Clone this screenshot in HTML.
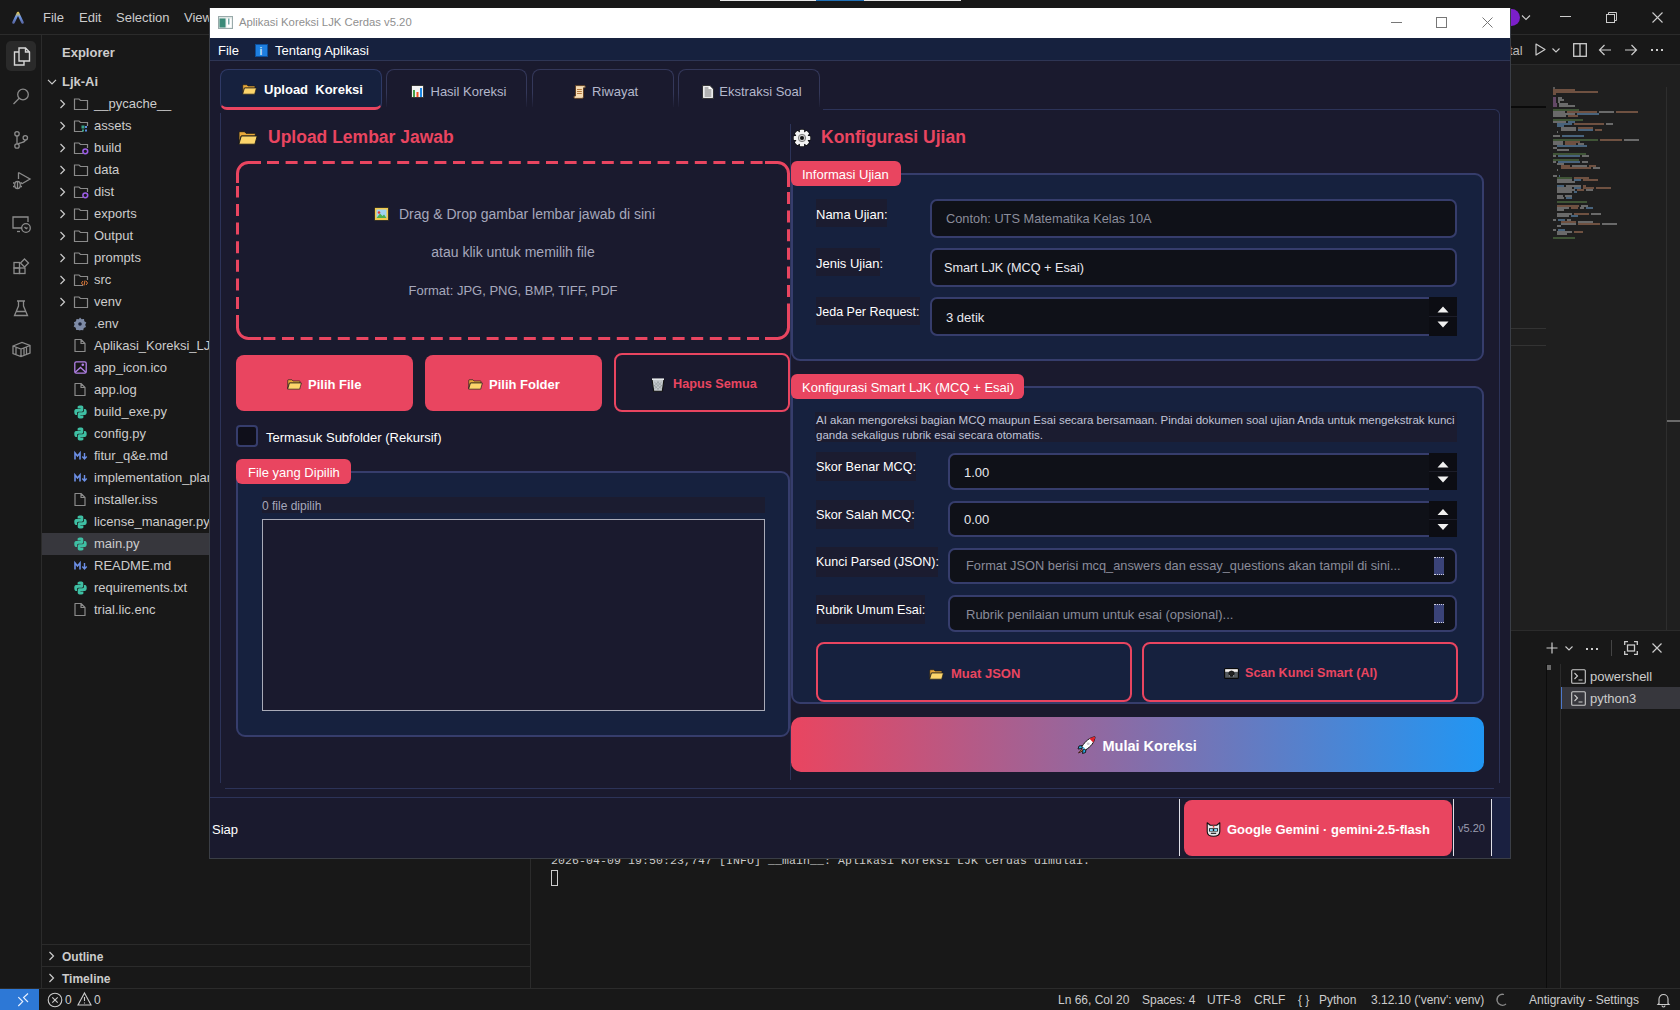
<!DOCTYPE html>
<html><head><meta charset="utf-8">
<style>
*{margin:0;padding:0;box-sizing:border-box}
html,body{width:1680px;height:1010px;overflow:hidden;background:#181818;font-family:"Liberation Sans",sans-serif;color:#ccc}
.a{position:absolute}
.t{position:absolute;white-space:nowrap;line-height:1}
svg{position:absolute;overflow:visible}
#vtitle{left:0;top:0;width:1680px;height:35px;background:#181818;border-bottom:1px solid #2b2b2b}
.menu{position:absolute;top:11px;font-size:13px;color:#cccccc;line-height:13px}
#act{left:0;top:35px;width:42px;height:953px;background:#181818;border-right:1px solid #2b2b2b}
#side{left:42px;top:35px;width:489px;height:953px;background:#181818;border-right:1px solid #2b2b2b}
#status{left:0;top:988px;width:1680px;height:22px;background:#181818;border-top:1px solid #2b2b2b}
.st{position:absolute;top:5px;font-size:12px;color:#cccccc;white-space:nowrap;line-height:12px}
.row{position:absolute;left:0;width:488px;height:22px}
.row .tx{position:absolute;left:52px;top:4px;font-size:13px;color:#cccccc;white-space:nowrap;line-height:14px}
.ai path,.ai rect,.ai circle,.ai ellipse{stroke:#8b8b8b;fill:none;stroke-width:1.3}
/* app */
#win{left:209px;top:8px;width:1302px;height:851px;background:#1a1a2e;overflow:hidden;border:1px solid #3a3e46;border-top:none}
.lbl{position:absolute;font-size:13px;color:#ffffff;white-space:nowrap;line-height:14px}
.inp{position:absolute;background:#0f0f1a;border:2px solid #2a3a6e;border-radius:7px}
.inp .v{position:absolute;left:12px;top:10px;font-size:13px;color:#e8e8e8;white-space:nowrap;line-height:14px}
.inp .ph{color:#8a8a98}
.grp{position:absolute;background:#16213e;border:2px solid #283868;border-radius:9px}
.pill{position:absolute;background:#e94560;border-radius:6px;color:#fff;font-size:13px;line-height:14px;white-space:nowrap}
.btn{position:absolute;border-radius:8px;font-weight:bold;font-size:13px;white-space:nowrap;line-height:14px}
.lb{position:absolute;background:#1a2036;height:29px}

</style></head><body>
<div class="a" id="vtitle">
  <svg style="left:11px;top:10px" width="14" height="14" viewBox="0 0 14 14"><defs><linearGradient id="lg" x1="0" y1="0" x2="0" y2="1"><stop offset="0" stop-color="#d9c25a"/><stop offset=".4" stop-color="#6f98e6"/><stop offset="1" stop-color="#5a6aa8"/></linearGradient></defs><path d="M2.5 12.5 L7 3 L11.5 12.5" stroke="url(#lg)" stroke-width="2.6" fill="none" stroke-linecap="round" stroke-linejoin="round"/></svg>
  <div class="menu" style="left:43px">File</div>
  <div class="menu" style="left:79px">Edit</div>
  <div class="menu" style="left:116px">Selection</div>
  <div class="menu" style="left:184px">View</div>
  <div class="a" style="left:720px;top:0;width:241px;height:1px;background:#e8e8e8"></div>
  <div class="a" style="left:816px;top:0;width:48px;height:1px;background:#1f6fb5"></div>
  <div class="a" style="left:1503px;top:9px;width:17px;height:17px;border-radius:9px;background:#7b1fc9"></div>
  <svg style="left:1521px;top:15px" width="10" height="6" viewBox="0 0 10 6"><path d="M1 0.5 L5 4.5 L9 0.5" stroke="#cccccc" fill="none" stroke-width="1.1"/></svg>
  <div class="a" style="left:1560px;top:16px;width:11px;height:1px;background:#cccccc"></div>
  <svg style="left:1606px;top:12px" width="11" height="11" viewBox="0 0 11 11"><rect x="0.5" y="2.5" width="8" height="8" stroke="#cccccc" fill="none"/><path d="M2.5 2.5 V0.5 H10.5 V8.5 H8.5" stroke="#cccccc" fill="none"/></svg>
  <svg style="left:1652px;top:12px" width="11" height="11" viewBox="0 0 11 11"><path d="M0.5 0.5 L10.5 10.5 M10.5 0.5 L0.5 10.5" stroke="#cccccc" stroke-width="1.1"/></svg>
</div>
<div class="a" id="act">
  <div class="a" style="left:6px;top:6px;width:30px;height:30px;border-radius:5px;background:#2a2a2a"></div>
  <svg style="left:13px;top:12px" width="18" height="19" viewBox="0 0 18 19"><path d="M6 1 H12.5 L16.5 5 V14 H6 Z M12.5 1 V5 H16.5" stroke="#d6d6d6" fill="none" stroke-width="1.4"/><path d="M6 5 H1.5 V18 H11 V14" stroke="#d6d6d6" fill="none" stroke-width="1.4"/></svg>
  <svg class="ai" style="left:12px;top:53px" width="18" height="18" viewBox="0 0 18 18"><circle cx="11" cy="6.5" r="5.3"/><path d="M7.2 10.3 L1.5 16"/></svg>
  <svg class="ai" style="left:12px;top:96px" width="18" height="18" viewBox="0 0 18 18"><circle cx="5" cy="2.8" r="2.2"/><circle cx="5" cy="15" r="2.2"/><circle cx="13.3" cy="6.8" r="2.2"/><path d="M5 5 V12.8 M13.3 9 C13.3 12 8 11 5.8 13.2"/></svg>
  <svg class="ai" style="left:12px;top:136px" width="19" height="19" viewBox="0 0 19 19"><path d="M6.5 1.5 L18 8 L9.5 13"/><path d="M6.5 1.5 V8"/><ellipse cx="5.5" cy="14" rx="2.8" ry="3.6"/><path d="M1 12 H2.7 M1 15.5 H2.7 M8.3 12 H10 M8.3 15.5 H10 M5.5 10.4 V17.6"/></svg>
  <svg class="ai" style="left:12px;top:181px" width="19" height="17" viewBox="0 0 19 17"><path d="M10 12 H1 V1 H16 V6"/><path d="M5 15.5 H8"/><circle cx="14" cy="12" r="4.3"/><path d="M12.5 11 L14 12.5 M15.5 11.5 L14 13"/></svg>
  <svg class="ai" style="left:13px;top:223px" width="17" height="16" viewBox="0 0 17 16"><rect x="1" y="4.5" width="5.5" height="5.5"/><rect x="1" y="10" width="5.5" height="5.5"/><rect x="6.5" y="10" width="5.5" height="5.5"/><path d="M11.5 1 L15.5 5 L11.5 9 L7.5 5 Z"/></svg>
  <svg class="ai" style="left:13px;top:265px" width="16" height="17" viewBox="0 0 16 17"><path d="M4 1 H12 M5.5 1 V6 L1.5 15.5 H14.5 L10.5 6 V1 M3.3 11.5 H12.7"/></svg>
  <svg class="ai" style="left:12px;top:306px" width="19" height="17" viewBox="0 0 19 17"><path d="M1 5 L10 1.5 L18 4.5 V12 L9 15.5 L1 12.5 Z M1 5 L9 8 L18 4.5 M9 8 V15.5 M4 6.3 V13.5 M12 7.3 V13.8 M14.5 6.5 V13"/></svg>
</div>
<div class="a" id="status">
  <div class="a" style="left:0;top:0;width:39px;height:22px;background:#2d78d6"></div>
  <svg style="left:17px;top:3px" width="12" height="14" viewBox="0 0 12 14"><path d="M11 1.5 L6.6 5.6 L11 10 M1.3 5.2 L5.7 9.6 L1.3 14" stroke="#e8f0ff" fill="none" stroke-width="1.2"/></svg>
  <svg style="left:47px;top:3px" width="16" height="16" viewBox="0 0 16 16"><circle cx="8" cy="8" r="6.8" stroke="#cccccc" fill="none" stroke-width="1.1"/><path d="M5.3 5.3 L10.7 10.7 M10.7 5.3 L5.3 10.7" stroke="#cccccc" stroke-width="1.1"/></svg>
  <div class="st" style="left:65px">0</div>
  <svg style="left:77px;top:3px" width="15" height="14" viewBox="0 0 15 14"><path d="M7.5 1 L14 13 H1 Z M7.5 5 V9 M7.5 10.5 V11.5" stroke="#cccccc" fill="none" stroke-width="1.1"/></svg>
  <div class="st" style="left:94px">0</div>
  <div class="st" style="left:1058px">Ln 66, Col 20</div>
  <div class="st" style="left:1142px">Spaces: 4</div>
  <div class="st" style="left:1207px">UTF-8</div>
  <div class="st" style="left:1254px">CRLF</div>
  <div class="st" style="left:1298px">{ }</div>
  <div class="st" style="left:1319px">Python</div>
  <div class="st" style="left:1371px">3.12.10 ('venv': venv)</div>
  <svg style="left:1495px;top:4px" width="12" height="13" viewBox="0 0 12 13"><path d="M9 1.5 A5.5 5.5 0 1 0 11 11" stroke="#8a8a8a" fill="none" stroke-width="1.3"/></svg>
  <div class="st" style="left:1529px">Antigravity - Settings</div>
  <svg style="left:1657px;top:4px" width="13" height="14" viewBox="0 0 13 14"><path d="M2 10.5 V6 A4.5 4.5 0 0 1 11 6 V10.5 L12 11.5 H1 Z M5 12.5 A1.5 1.5 0 0 0 8 12.5" stroke="#cccccc" fill="none" stroke-width="1.1"/></svg>
</div>
<div class="a" id="side">
<div class="t" style="left:20px;top:11px;font-size:13px;font-weight:bold;color:#cccccc">Explorer</div>
<div class="row" style="top:36px;"><svg style="left:5px;top:8px" width="10" height="6" viewBox="0 0 10 6"><path d="M1 0.8 L5 4.8 L9 0.8" stroke="#cccccc" fill="none" stroke-width="1.2"/></svg><div class="tx" style="left:20px;font-weight:bold">Ljk-Ai</div></div>
<div class="row" style="top:58px;"><svg style="left:17px;top:6px" width="8" height="10" viewBox="0 0 8 10"><path d="M1.5 1 L5.5 5 L1.5 9" stroke="#cccccc" fill="none" stroke-width="1.2"/></svg><svg style="left:31px;top:4px" width="16" height="14" viewBox="0 0 16 14"><path d="M1.5 2 H6 L7.5 3.5 H14.5 V12.5 H1.5 Z" stroke="#8b8b8b" fill="none" stroke-width="1.2"/></svg><div class="tx">__pycache__</div></div>
<div class="row" style="top:80px;"><svg style="left:17px;top:6px" width="8" height="10" viewBox="0 0 8 10"><path d="M1.5 1 L5.5 5 L1.5 9" stroke="#cccccc" fill="none" stroke-width="1.2"/></svg><svg style="left:31px;top:4px" width="16" height="14" viewBox="0 0 16 14"><path d="M10 12.5 H1.5 V2 H6 L7.5 3.5 H14.5 V7" stroke="#8b8b8b" fill="none" stroke-width="1.2"/><rect x="8.5" y="6.5" width="3" height="3" fill="#3aa58a"/><rect x="12" y="7" width="2" height="2" fill="#5a8de0"/><rect x="12" y="10.5" width="2" height="2" fill="#5a8de0"/><rect x="9" y="10.5" width="2" height="2" fill="#3aa58a"/></svg><div class="tx">assets</div></div>
<div class="row" style="top:102px;"><svg style="left:17px;top:6px" width="8" height="10" viewBox="0 0 8 10"><path d="M1.5 1 L5.5 5 L1.5 9" stroke="#cccccc" fill="none" stroke-width="1.2"/></svg><svg style="left:31px;top:4px" width="16" height="14" viewBox="0 0 16 14"><path d="M10 12.5 H1.5 V2 H6 L7.5 3.5 H14.5 V7" stroke="#8b8b8b" fill="none" stroke-width="1.2"/><circle cx="12.3" cy="10.3" r="2.4" stroke="#9d5ee8" fill="none" stroke-width="1.5"/></svg><div class="tx">build</div></div>
<div class="row" style="top:124px;"><svg style="left:17px;top:6px" width="8" height="10" viewBox="0 0 8 10"><path d="M1.5 1 L5.5 5 L1.5 9" stroke="#cccccc" fill="none" stroke-width="1.2"/></svg><svg style="left:31px;top:4px" width="16" height="14" viewBox="0 0 16 14"><path d="M1.5 2 H6 L7.5 3.5 H14.5 V12.5 H1.5 Z" stroke="#8b8b8b" fill="none" stroke-width="1.2"/></svg><div class="tx">data</div></div>
<div class="row" style="top:146px;"><svg style="left:17px;top:6px" width="8" height="10" viewBox="0 0 8 10"><path d="M1.5 1 L5.5 5 L1.5 9" stroke="#cccccc" fill="none" stroke-width="1.2"/></svg><svg style="left:31px;top:4px" width="16" height="14" viewBox="0 0 16 14"><path d="M10 12.5 H1.5 V2 H6 L7.5 3.5 H14.5 V7" stroke="#8b8b8b" fill="none" stroke-width="1.2"/><circle cx="12.3" cy="10.3" r="2.4" stroke="#9d5ee8" fill="none" stroke-width="1.5"/></svg><div class="tx">dist</div></div>
<div class="row" style="top:168px;"><svg style="left:17px;top:6px" width="8" height="10" viewBox="0 0 8 10"><path d="M1.5 1 L5.5 5 L1.5 9" stroke="#cccccc" fill="none" stroke-width="1.2"/></svg><svg style="left:31px;top:4px" width="16" height="14" viewBox="0 0 16 14"><path d="M1.5 2 H6 L7.5 3.5 H14.5 V12.5 H1.5 Z" stroke="#8b8b8b" fill="none" stroke-width="1.2"/></svg><div class="tx">exports</div></div>
<div class="row" style="top:190px;"><svg style="left:17px;top:6px" width="8" height="10" viewBox="0 0 8 10"><path d="M1.5 1 L5.5 5 L1.5 9" stroke="#cccccc" fill="none" stroke-width="1.2"/></svg><svg style="left:31px;top:4px" width="16" height="14" viewBox="0 0 16 14"><path d="M1.5 2 H6 L7.5 3.5 H14.5 V12.5 H1.5 Z" stroke="#8b8b8b" fill="none" stroke-width="1.2"/></svg><div class="tx">Output</div></div>
<div class="row" style="top:212px;"><svg style="left:17px;top:6px" width="8" height="10" viewBox="0 0 8 10"><path d="M1.5 1 L5.5 5 L1.5 9" stroke="#cccccc" fill="none" stroke-width="1.2"/></svg><svg style="left:31px;top:4px" width="16" height="14" viewBox="0 0 16 14"><path d="M1.5 2 H6 L7.5 3.5 H14.5 V12.5 H1.5 Z" stroke="#8b8b8b" fill="none" stroke-width="1.2"/></svg><div class="tx">prompts</div></div>
<div class="row" style="top:234px;"><svg style="left:17px;top:6px" width="8" height="10" viewBox="0 0 8 10"><path d="M1.5 1 L5.5 5 L1.5 9" stroke="#cccccc" fill="none" stroke-width="1.2"/></svg><svg style="left:31px;top:4px" width="16" height="14" viewBox="0 0 16 14"><path d="M10 12.5 H1.5 V2 H6 L7.5 3.5 H14.5 V7" stroke="#8b8b8b" fill="none" stroke-width="1.2"/><path d="M10 8 L8.5 10 L10 12 M13 8 L14.5 10 L13 12 M12 7.5 L11 12.5" stroke="#e07a3a" fill="none" stroke-width="1"/></svg><div class="tx">src</div></div>
<div class="row" style="top:256px;"><svg style="left:17px;top:6px" width="8" height="10" viewBox="0 0 8 10"><path d="M1.5 1 L5.5 5 L1.5 9" stroke="#cccccc" fill="none" stroke-width="1.2"/></svg><svg style="left:31px;top:4px" width="16" height="14" viewBox="0 0 16 14"><path d="M1.5 2 H6 L7.5 3.5 H14.5 V12.5 H1.5 Z" stroke="#8b8b8b" fill="none" stroke-width="1.2"/></svg><div class="tx">venv</div></div>
<div class="row" style="top:278px;"><svg style="left:31px;top:4px" width="14" height="14" viewBox="0 0 14 14"><path d="M7 0.5 L8.6 2.2 L11 1.9 L11.3 4.3 L13.3 5.6 L12.2 7.8 L13 10 L10.8 11 L10.2 13.3 L7.8 13 L7 13.5 L5.2 12.9 L3.2 13 L2.7 10.8 L0.7 9.6 L1.6 7.4 L0.9 5.2 L3 4.2 L3.5 1.9 L5.8 2.2 Z" fill="#7e8ba6"/><circle cx="7" cy="7" r="1.8" fill="#1a2238"/></svg><div class="tx">.env</div></div>
<div class="row" style="top:300px;"><svg style="left:32px;top:3px" width="12" height="15" viewBox="0 0 12 15"><path d="M1 1.5 H7 L11 5.5 V13.5 H1 Z M7 1.5 V5.5 H11" stroke="#8b8b8b" fill="none" stroke-width="1.2" stroke-linejoin="round"/></svg><div class="tx">Aplikasi_Koreksi_LJK_Cerdas.spec</div></div>
<div class="row" style="top:322px;"><svg style="left:32px;top:4px" width="13" height="13" viewBox="0 0 13 13"><rect x="0.8" y="0.8" width="11.4" height="11.4" rx="1.5" stroke="#b180e6" fill="none" stroke-width="1.3"/><path d="M1 11.5 L6.5 6.5 L12 11.5" stroke="#b180e6" fill="none" stroke-width="1.3"/><circle cx="8.8" cy="3.8" r="1.3" fill="#b180e6"/></svg><div class="tx">app_icon.ico</div></div>
<div class="row" style="top:344px;"><svg style="left:32px;top:3px" width="12" height="15" viewBox="0 0 12 15"><path d="M1 1.5 H7 L11 5.5 V13.5 H1 Z M7 1.5 V5.5 H11" stroke="#8b8b8b" fill="none" stroke-width="1.2" stroke-linejoin="round"/></svg><div class="tx">app.log</div></div>
<div class="row" style="top:366px;"><svg style="left:32px;top:4px" width="13" height="14" viewBox="0 0 13 14"><path d="M6.5 0.5 C3.5 0.5 3.6 1.8 3.6 1.8 V3.4 H6.6 V4 H2.2 C2.2 4 0.3 3.8 0.3 6.9 C0.3 10 2 9.9 2 9.9 H3 V8.4 C3 8.4 2.9 6.7 4.7 6.7 H7.6 C7.6 6.7 9.3 6.7 9.3 5 V2.2 C9.3 2.2 9.5 0.5 6.5 0.5 Z" fill="#3ebfa3"/><path d="M6.5 13.5 C9.5 13.5 9.4 12.2 9.4 12.2 V10.6 H6.4 V10 H10.8 C10.8 10 12.7 10.2 12.7 7.1 C12.7 4 11 4.1 11 4.1 H10 V5.6 C10 5.6 10.1 7.3 8.3 7.3 H5.4 C5.4 7.3 3.7 7.3 3.7 9 V11.8 C3.7 11.8 3.5 13.5 6.5 13.5 Z" fill="#3ebfa3"/></svg><div class="tx">build_exe.py</div></div>
<div class="row" style="top:388px;"><svg style="left:32px;top:4px" width="13" height="14" viewBox="0 0 13 14"><path d="M6.5 0.5 C3.5 0.5 3.6 1.8 3.6 1.8 V3.4 H6.6 V4 H2.2 C2.2 4 0.3 3.8 0.3 6.9 C0.3 10 2 9.9 2 9.9 H3 V8.4 C3 8.4 2.9 6.7 4.7 6.7 H7.6 C7.6 6.7 9.3 6.7 9.3 5 V2.2 C9.3 2.2 9.5 0.5 6.5 0.5 Z" fill="#3ebfa3"/><path d="M6.5 13.5 C9.5 13.5 9.4 12.2 9.4 12.2 V10.6 H6.4 V10 H10.8 C10.8 10 12.7 10.2 12.7 7.1 C12.7 4 11 4.1 11 4.1 H10 V5.6 C10 5.6 10.1 7.3 8.3 7.3 H5.4 C5.4 7.3 3.7 7.3 3.7 9 V11.8 C3.7 11.8 3.5 13.5 6.5 13.5 Z" fill="#3ebfa3"/></svg><div class="tx">config.py</div></div>
<div class="row" style="top:410px;"><svg style="left:32px;top:7px" width="14" height="8" viewBox="0 0 14 8"><path d="M1 7.5 V1 L3.5 4 L6 1 V7.5" stroke="#6c8fe6" fill="none" stroke-width="1.6"/><path d="M10.5 1 V7 M8.3 4.5 L10.5 7 L12.7 4.5" stroke="#6c8fe6" fill="none" stroke-width="1.4"/></svg><div class="tx">fitur_q&amp;e.md</div></div>
<div class="row" style="top:432px;"><svg style="left:32px;top:7px" width="14" height="8" viewBox="0 0 14 8"><path d="M1 7.5 V1 L3.5 4 L6 1 V7.5" stroke="#6c8fe6" fill="none" stroke-width="1.6"/><path d="M10.5 1 V7 M8.3 4.5 L10.5 7 L12.7 4.5" stroke="#6c8fe6" fill="none" stroke-width="1.4"/></svg><div class="tx">implementation_plan.md</div></div>
<div class="row" style="top:454px;"><svg style="left:32px;top:3px" width="12" height="15" viewBox="0 0 12 15"><path d="M1 1.5 H7 L11 5.5 V13.5 H1 Z M7 1.5 V5.5 H11" stroke="#8b8b8b" fill="none" stroke-width="1.2" stroke-linejoin="round"/></svg><div class="tx">installer.iss</div></div>
<div class="row" style="top:476px;"><svg style="left:32px;top:4px" width="13" height="14" viewBox="0 0 13 14"><path d="M6.5 0.5 C3.5 0.5 3.6 1.8 3.6 1.8 V3.4 H6.6 V4 H2.2 C2.2 4 0.3 3.8 0.3 6.9 C0.3 10 2 9.9 2 9.9 H3 V8.4 C3 8.4 2.9 6.7 4.7 6.7 H7.6 C7.6 6.7 9.3 6.7 9.3 5 V2.2 C9.3 2.2 9.5 0.5 6.5 0.5 Z" fill="#3ebfa3"/><path d="M6.5 13.5 C9.5 13.5 9.4 12.2 9.4 12.2 V10.6 H6.4 V10 H10.8 C10.8 10 12.7 10.2 12.7 7.1 C12.7 4 11 4.1 11 4.1 H10 V5.6 C10 5.6 10.1 7.3 8.3 7.3 H5.4 C5.4 7.3 3.7 7.3 3.7 9 V11.8 C3.7 11.8 3.5 13.5 6.5 13.5 Z" fill="#3ebfa3"/></svg><div class="tx">license_manager.py</div></div>
<div class="row" style="top:498px;background:#37373d;"><svg style="left:32px;top:4px" width="13" height="14" viewBox="0 0 13 14"><path d="M6.5 0.5 C3.5 0.5 3.6 1.8 3.6 1.8 V3.4 H6.6 V4 H2.2 C2.2 4 0.3 3.8 0.3 6.9 C0.3 10 2 9.9 2 9.9 H3 V8.4 C3 8.4 2.9 6.7 4.7 6.7 H7.6 C7.6 6.7 9.3 6.7 9.3 5 V2.2 C9.3 2.2 9.5 0.5 6.5 0.5 Z" fill="#3ebfa3"/><path d="M6.5 13.5 C9.5 13.5 9.4 12.2 9.4 12.2 V10.6 H6.4 V10 H10.8 C10.8 10 12.7 10.2 12.7 7.1 C12.7 4 11 4.1 11 4.1 H10 V5.6 C10 5.6 10.1 7.3 8.3 7.3 H5.4 C5.4 7.3 3.7 7.3 3.7 9 V11.8 C3.7 11.8 3.5 13.5 6.5 13.5 Z" fill="#3ebfa3"/></svg><div class="tx">main.py</div></div>
<div class="row" style="top:520px;"><svg style="left:32px;top:7px" width="14" height="8" viewBox="0 0 14 8"><path d="M1 7.5 V1 L3.5 4 L6 1 V7.5" stroke="#6c8fe6" fill="none" stroke-width="1.6"/><path d="M10.5 1 V7 M8.3 4.5 L10.5 7 L12.7 4.5" stroke="#6c8fe6" fill="none" stroke-width="1.4"/></svg><div class="tx">README.md</div></div>
<div class="row" style="top:542px;"><svg style="left:32px;top:4px" width="13" height="14" viewBox="0 0 13 14"><path d="M6.5 0.5 C3.5 0.5 3.6 1.8 3.6 1.8 V3.4 H6.6 V4 H2.2 C2.2 4 0.3 3.8 0.3 6.9 C0.3 10 2 9.9 2 9.9 H3 V8.4 C3 8.4 2.9 6.7 4.7 6.7 H7.6 C7.6 6.7 9.3 6.7 9.3 5 V2.2 C9.3 2.2 9.5 0.5 6.5 0.5 Z" fill="#3ebfa3"/><path d="M6.5 13.5 C9.5 13.5 9.4 12.2 9.4 12.2 V10.6 H6.4 V10 H10.8 C10.8 10 12.7 10.2 12.7 7.1 C12.7 4 11 4.1 11 4.1 H10 V5.6 C10 5.6 10.1 7.3 8.3 7.3 H5.4 C5.4 7.3 3.7 7.3 3.7 9 V11.8 C3.7 11.8 3.5 13.5 6.5 13.5 Z" fill="#3ebfa3"/></svg><div class="tx">requirements.txt</div></div>
<div class="row" style="top:564px;"><svg style="left:32px;top:3px" width="12" height="15" viewBox="0 0 12 15"><path d="M1 1.5 H7 L11 5.5 V13.5 H1 Z M7 1.5 V5.5 H11" stroke="#8b8b8b" fill="none" stroke-width="1.2" stroke-linejoin="round"/></svg><div class="tx">trial.lic.enc</div></div>
<div class="a" style="left:0;top:909px;width:488px;height:1px;background:#2b2b2b"></div>
<div class="row" style="top:910px"><svg style="left:6px;top:6px" width="8" height="10" viewBox="0 0 8 10"><path d="M1.5 1 L5.5 5 L1.5 9" stroke="#cccccc" fill="none" stroke-width="1.2"/></svg><div class="tx" style="left:20px;font-weight:bold;font-size:12px;top:5px">Outline</div></div>
<div class="a" style="left:0;top:931px;width:488px;height:1px;background:#2b2b2b"></div>
<div class="row" style="top:932px"><svg style="left:6px;top:6px" width="8" height="10" viewBox="0 0 8 10"><path d="M1.5 1 L5.5 5 L1.5 9" stroke="#cccccc" fill="none" stroke-width="1.2"/></svg><div class="tx" style="left:20px;font-weight:bold;font-size:12px;top:5px">Timeline</div></div>
</div><div class="a" style="left:531px;top:35px;width:1149px;height:30px;background:#181818;border-bottom:1px solid #2b2b2b"></div>
<div class="t" style="left:1509px;top:44px;font-size:13px;color:#b8b8b8">tal</div>
<svg style="left:1535px;top:43px" width="11" height="13" viewBox="0 0 11 13"><path d="M1 1 L10 6.5 L1 12 Z" stroke="#cccccc" fill="none" stroke-width="1.2" stroke-linejoin="round"/></svg>
<svg style="left:1552px;top:48px" width="8" height="5" viewBox="0 0 8 5"><path d="M0.5 0.5 L4 4 L7.5 0.5" stroke="#cccccc" fill="none" stroke-width="1.1"/></svg>
<svg style="left:1573px;top:43px" width="14" height="14" viewBox="0 0 14 14"><rect x="0.7" y="0.7" width="12.6" height="12.6" stroke="#cccccc" fill="none" stroke-width="1.3"/><path d="M7 0.7 V13.3" stroke="#cccccc" stroke-width="1.3"/></svg>
<svg style="left:1598px;top:44px" width="14" height="12" viewBox="0 0 14 12"><path d="M13 6 H1.5 M6.5 1 L1.5 6 L6.5 11" stroke="#cccccc" fill="none" stroke-width="1.2"/></svg>
<svg style="left:1624px;top:44px" width="14" height="12" viewBox="0 0 14 12"><path d="M1 6 H12.5 M7.5 1 L12.5 6 L7.5 11" stroke="#cccccc" fill="none" stroke-width="1.2"/></svg>
<div class="a" style="left:1651px;top:49px;width:2px;height:2px;background:#cccccc"></div>
<div class="a" style="left:1656px;top:49px;width:2px;height:2px;background:#cccccc"></div>
<div class="a" style="left:1661px;top:49px;width:2px;height:2px;background:#cccccc"></div>
<div class="a" style="left:531px;top:65px;width:1149px;height:565px;background:#1f1f1f"></div>
<div class="a" style="left:1510px;top:106px;width:36px;height:2px;background:#0a0a0a"></div>
<div class="a" style="left:1510px;top:328px;width:36px;height:1px;background:#333"></div>
<div class="a" style="left:1510px;top:345px;width:36px;height:1px;background:#333"></div>
<div class="a" style="left:1666px;top:87px;width:1px;height:544px;background:#2e2e2e"></div>
<div class="a" style="left:1667px;top:420px;width:13px;height:2px;background:#6a6a6a"></div>
<div class="a" style="left:1553px;top:87px;width:2px;height:1.5px;background:#888;opacity:.55"></div>
<div class="a" style="left:1553px;top:89px;width:22px;height:1.5px;background:#b07a5c;opacity:.55"></div>
<div class="a" style="left:1553px;top:91px;width:45px;height:1.5px;background:#b07a5c;opacity:.55"></div>
<div class="a" style="left:1553px;top:93px;width:3px;height:1.5px;background:#b07a5c;opacity:.55"></div>
<div class="a" style="left:1553px;top:97px;width:3px;height:1.5px;background:#9a6aa0;opacity:.55"></div>
<div class="a" style="left:1558px;top:97px;width:4px;height:1.5px;background:#a8a8a8;opacity:.55"></div>
<div class="a" style="left:1553px;top:99px;width:3px;height:1.5px;background:#9a6aa0;opacity:.55"></div>
<div class="a" style="left:1558px;top:99px;width:6px;height:1.5px;background:#a8a8a8;opacity:.55"></div>
<div class="a" style="left:1553px;top:101px;width:3px;height:1.5px;background:#9a6aa0;opacity:.55"></div>
<div class="a" style="left:1558px;top:101px;width:2px;height:1.5px;background:#a8a8a8;opacity:.55"></div>
<div class="a" style="left:1553px;top:103px;width:4px;height:1.5px;background:#9a6aa0;opacity:.55"></div>
<div class="a" style="left:1559px;top:103px;width:9px;height:1.5px;background:#a8a8a8;opacity:.55"></div>
<div class="a" style="left:1553px;top:105px;width:4px;height:1.5px;background:#9a6aa0;opacity:.55"></div>
<div class="a" style="left:1559px;top:105px;width:16px;height:1.5px;background:#a8a8a8;opacity:.55"></div>
<div class="a" style="left:1553px;top:109px;width:26px;height:1.5px;background:#5a8048;opacity:.55"></div>
<div class="a" style="left:1553px;top:111px;width:12px;height:1.5px;background:#a8a8a8;opacity:.55"></div>
<div class="a" style="left:1567px;top:111px;width:30px;height:1.5px;background:#b07a5c;opacity:.55"></div>
<div class="a" style="left:1599px;top:111px;width:15px;height:1.5px;background:#a8a8a8;opacity:.55"></div>
<div class="a" style="left:1616px;top:111px;width:22px;height:1.5px;background:#b07a5c;opacity:.55"></div>
<div class="a" style="left:1553px;top:113px;width:22px;height:1.5px;background:#a8a8a8;opacity:.55"></div>
<div class="a" style="left:1577px;top:113px;width:22px;height:1.5px;background:#6a9ac8;opacity:.55"></div>
<div class="a" style="left:1553px;top:115px;width:13px;height:1.5px;background:#a8a8a8;opacity:.55"></div>
<div class="a" style="left:1568px;top:115px;width:10px;height:1.5px;background:#b07a5c;opacity:.55"></div>
<div class="a" style="left:1553px;top:119px;width:30px;height:1.5px;background:#5a8048;opacity:.55"></div>
<div class="a" style="left:1553px;top:121px;width:13px;height:1.5px;background:#a8a8a8;opacity:.55"></div>
<div class="a" style="left:1568px;top:121px;width:7px;height:1.5px;background:#6a9ac8;opacity:.55"></div>
<div class="a" style="left:1557px;top:123px;width:15px;height:1.5px;background:#6a9ac8;opacity:.55"></div>
<div class="a" style="left:1574px;top:123px;width:30px;height:1.5px;background:#b07a5c;opacity:.55"></div>
<div class="a" style="left:1606px;top:123px;width:7px;height:1.5px;background:#a8a8a8;opacity:.55"></div>
<div class="a" style="left:1557px;top:125px;width:7px;height:1.5px;background:#6a9ac8;opacity:.55"></div>
<div class="a" style="left:1561px;top:127px;width:15px;height:1.5px;background:#a8a8a8;opacity:.55"></div>
<div class="a" style="left:1578px;top:127px;width:15px;height:1.5px;background:#b07a5c;opacity:.55"></div>
<div class="a" style="left:1561px;top:129px;width:15px;height:1.5px;background:#a8a8a8;opacity:.55"></div>
<div class="a" style="left:1578px;top:129px;width:15px;height:1.5px;background:#6a9ac8;opacity:.55"></div>
<div class="a" style="left:1595px;top:129px;width:7px;height:1.5px;background:#b07a5c;opacity:.55"></div>
<div class="a" style="left:1557px;top:131px;width:1px;height:1.5px;background:#a8a8a8;opacity:.55"></div>
<div class="a" style="left:1553px;top:135px;width:7px;height:1.5px;background:#a8a8a8;opacity:.55"></div>
<div class="a" style="left:1562px;top:135px;width:22px;height:1.5px;background:#6a9ac8;opacity:.55"></div>
<div class="a" style="left:1553px;top:139px;width:45px;height:1.5px;background:#5a8048;opacity:.55"></div>
<div class="a" style="left:1600px;top:139px;width:22px;height:1.5px;background:#b07a5c;opacity:.55"></div>
<div class="a" style="left:1624px;top:139px;width:15px;height:1.5px;background:#a8a8a8;opacity:.55"></div>
<div class="a" style="left:1553px;top:141px;width:10px;height:1.5px;background:#a8a8a8;opacity:.55"></div>
<div class="a" style="left:1565px;top:141px;width:15px;height:1.5px;background:#b07a5c;opacity:.55"></div>
<div class="a" style="left:1553px;top:143px;width:10px;height:1.5px;background:#a8a8a8;opacity:.55"></div>
<div class="a" style="left:1565px;top:143px;width:11px;height:1.5px;background:#b07a5c;opacity:.55"></div>
<div class="a" style="left:1578px;top:143px;width:6px;height:1.5px;background:#a8a8a8;opacity:.55"></div>
<div class="a" style="left:1557px;top:145px;width:30px;height:1.5px;background:#6a9ac8;opacity:.55"></div>
<div class="a" style="left:1553px;top:147px;width:4px;height:1.5px;background:#a8a8a8;opacity:.55"></div>
<div class="a" style="left:1557px;top:149px;width:12px;height:1.5px;background:#a8a8a8;opacity:.55"></div>
<div class="a" style="left:1553px;top:153px;width:33px;height:1.5px;background:#5a8048;opacity:.55"></div>
<div class="a" style="left:1553px;top:155px;width:3px;height:1.5px;background:#a8a8a8;opacity:.55"></div>
<div class="a" style="left:1558px;top:155px;width:22px;height:1.5px;background:#6a9ac8;opacity:.55"></div>
<div class="a" style="left:1582px;top:155px;width:7px;height:1.5px;background:#a8a8a8;opacity:.55"></div>
<div class="a" style="left:1553px;top:159px;width:26px;height:1.5px;background:#5a8048;opacity:.55"></div>
<div class="a" style="left:1553px;top:161px;width:3px;height:1.5px;background:#a8a8a8;opacity:.55"></div>
<div class="a" style="left:1558px;top:161px;width:22px;height:1.5px;background:#6a9ac8;opacity:.55"></div>
<div class="a" style="left:1582px;top:161px;width:6px;height:1.5px;background:#a8a8a8;opacity:.55"></div>
<div class="a" style="left:1557px;top:163px;width:7px;height:1.5px;background:#a8a8a8;opacity:.55"></div>
<div class="a" style="left:1561px;top:165px;width:9px;height:1.5px;background:#b07a5c;opacity:.55"></div>
<div class="a" style="left:1572px;top:165px;width:15px;height:1.5px;background:#a8a8a8;opacity:.55"></div>
<div class="a" style="left:1589px;top:165px;width:7px;height:1.5px;background:#b07a5c;opacity:.55"></div>
<div class="a" style="left:1561px;top:167px;width:30px;height:1.5px;background:#b07a5c;opacity:.55"></div>
<div class="a" style="left:1593px;top:167px;width:7px;height:1.5px;background:#a8a8a8;opacity:.55"></div>
<div class="a" style="left:1557px;top:169px;width:1px;height:1.5px;background:#a8a8a8;opacity:.55"></div>
<div class="a" style="left:1553px;top:175px;width:4px;height:1.5px;background:#a8a8a8;opacity:.55"></div>
<div class="a" style="left:1559px;top:175px;width:1px;height:1.5px;background:#6a9ac8;opacity:.55"></div>
<div class="a" style="left:1557px;top:177px;width:15px;height:1.5px;background:#5a8048;opacity:.55"></div>
<div class="a" style="left:1574px;top:177px;width:15px;height:1.5px;background:#b07a5c;opacity:.55"></div>
<div class="a" style="left:1557px;top:179px;width:15px;height:1.5px;background:#a8a8a8;opacity:.55"></div>
<div class="a" style="left:1574px;top:179px;width:7px;height:1.5px;background:#6a9ac8;opacity:.55"></div>
<div class="a" style="left:1583px;top:179px;width:15px;height:1.5px;background:#b07a5c;opacity:.55"></div>
<div class="a" style="left:1557px;top:181px;width:18px;height:1.5px;background:#a8a8a8;opacity:.55"></div>
<div class="a" style="left:1557px;top:185px;width:7px;height:1.5px;background:#6a9ac8;opacity:.55"></div>
<div class="a" style="left:1566px;top:185px;width:15px;height:1.5px;background:#a8a8a8;opacity:.55"></div>
<div class="a" style="left:1583px;top:185px;width:3px;height:1.5px;background:#b07a5c;opacity:.55"></div>
<div class="a" style="left:1557px;top:187px;width:15px;height:1.5px;background:#a8a8a8;opacity:.55"></div>
<div class="a" style="left:1574px;top:187px;width:7px;height:1.5px;background:#6a9ac8;opacity:.55"></div>
<div class="a" style="left:1583px;top:187px;width:11px;height:1.5px;background:#b07a5c;opacity:.55"></div>
<div class="a" style="left:1596px;top:187px;width:15px;height:1.5px;background:#b07a5c;opacity:.55"></div>
<div class="a" style="left:1557px;top:189px;width:18px;height:1.5px;background:#a8a8a8;opacity:.55"></div>
<div class="a" style="left:1577px;top:189px;width:7px;height:1.5px;background:#b07a5c;opacity:.55"></div>
<div class="a" style="left:1586px;top:189px;width:7px;height:1.5px;background:#a8a8a8;opacity:.55"></div>
<div class="a" style="left:1557px;top:191px;width:15px;height:1.5px;background:#a8a8a8;opacity:.55"></div>
<div class="a" style="left:1574px;top:191px;width:3px;height:1.5px;background:#6a9ac8;opacity:.55"></div>
<div class="a" style="left:1557px;top:195px;width:6px;height:1.5px;background:#a8a8a8;opacity:.55"></div>
<div class="a" style="left:1565px;top:195px;width:7px;height:1.5px;background:#a8a8a8;opacity:.55"></div>
<div class="a" style="left:1557px;top:197px;width:7px;height:1.5px;background:#a8a8a8;opacity:.55"></div>
<div class="a" style="left:1566px;top:197px;width:6px;height:1.5px;background:#6a9ac8;opacity:.55"></div>
<div class="a" style="left:1557px;top:201px;width:30px;height:1.5px;background:#5a8048;opacity:.55"></div>
<div class="a" style="left:1557px;top:205px;width:22px;height:1.5px;background:#b07a5c;opacity:.55"></div>
<div class="a" style="left:1581px;top:205px;width:7px;height:1.5px;background:#a8a8a8;opacity:.55"></div>
<div class="a" style="left:1557px;top:207px;width:12px;height:1.5px;background:#a8a8a8;opacity:.55"></div>
<div class="a" style="left:1571px;top:207px;width:7px;height:1.5px;background:#b07a5c;opacity:.55"></div>
<div class="a" style="left:1580px;top:207px;width:4px;height:1.5px;background:#a8a8a8;opacity:.55"></div>
<div class="a" style="left:1586px;top:207px;width:7px;height:1.5px;background:#6a9ac8;opacity:.55"></div>
<div class="a" style="left:1557px;top:209px;width:7px;height:1.5px;background:#a8a8a8;opacity:.55"></div>
<div class="a" style="left:1557px;top:213px;width:15px;height:1.5px;background:#a8a8a8;opacity:.55"></div>
<div class="a" style="left:1574px;top:213px;width:15px;height:1.5px;background:#b07a5c;opacity:.55"></div>
<div class="a" style="left:1591px;top:213px;width:10px;height:1.5px;background:#a8a8a8;opacity:.55"></div>
<div class="a" style="left:1557px;top:215px;width:12px;height:1.5px;background:#a8a8a8;opacity:.55"></div>
<div class="a" style="left:1571px;top:215px;width:7px;height:1.5px;background:#6a9ac8;opacity:.55"></div>
<div class="a" style="left:1553px;top:219px;width:3px;height:1.5px;background:#a8a8a8;opacity:.55"></div>
<div class="a" style="left:1558px;top:219px;width:7px;height:1.5px;background:#6a9ac8;opacity:.55"></div>
<div class="a" style="left:1567px;top:219px;width:4px;height:1.5px;background:#a8a8a8;opacity:.55"></div>
<div class="a" style="left:1561px;top:221px;width:15px;height:1.5px;background:#b07a5c;opacity:.55"></div>
<div class="a" style="left:1578px;top:221px;width:15px;height:1.5px;background:#a8a8a8;opacity:.55"></div>
<div class="a" style="left:1561px;top:223px;width:15px;height:1.5px;background:#a8a8a8;opacity:.55"></div>
<div class="a" style="left:1578px;top:223px;width:22px;height:1.5px;background:#b07a5c;opacity:.55"></div>
<div class="a" style="left:1602px;top:223px;width:15px;height:1.5px;background:#a8a8a8;opacity:.55"></div>
<div class="a" style="left:1557px;top:225px;width:4px;height:1.5px;background:#a8a8a8;opacity:.55"></div>
<div class="a" style="left:1553px;top:229px;width:3px;height:1.5px;background:#a8a8a8;opacity:.55"></div>
<div class="a" style="left:1558px;top:229px;width:7px;height:1.5px;background:#6a9ac8;opacity:.55"></div>
<div class="a" style="left:1557px;top:231px;width:15px;height:1.5px;background:#a8a8a8;opacity:.55"></div>
<div class="a" style="left:1574px;top:231px;width:9px;height:1.5px;background:#b07a5c;opacity:.55"></div>
<div class="a" style="left:1557px;top:233px;width:10px;height:1.5px;background:#a8a8a8;opacity:.55"></div>
<div class="a" style="left:1553px;top:237px;width:22px;height:1.5px;background:#5a8048;opacity:.55"></div>
<div class="a" style="left:531px;top:630px;width:1149px;height:358px;background:#181818;border-top:1px solid #2b2b2b"></div>
<svg style="left:1546px;top:642px" width="12" height="12" viewBox="0 0 12 12"><path d="M6 0.5 V11.5 M0.5 6 H11.5" stroke="#cccccc" stroke-width="1.2"/></svg>
<svg style="left:1565px;top:646px" width="8" height="5" viewBox="0 0 8 5"><path d="M0.5 0.5 L4 4 L7.5 0.5" stroke="#cccccc" fill="none" stroke-width="1.1"/></svg>
<div class="a" style="left:1586px;top:648px;width:2px;height:2px;background:#cccccc"></div>
<div class="a" style="left:1591px;top:648px;width:2px;height:2px;background:#cccccc"></div>
<div class="a" style="left:1596px;top:648px;width:2px;height:2px;background:#cccccc"></div>
<div class="a" style="left:1611px;top:640px;width:1px;height:16px;background:#444"></div>
<svg style="left:1624px;top:641px" width="14" height="14" viewBox="0 0 14 14"><path d="M0.7 4 V0.7 H4 M10 0.7 H13.3 V4 M13.3 10 V13.3 H10 M4 13.3 H0.7 V10" stroke="#cccccc" fill="none" stroke-width="1.3"/><rect x="3.5" y="4" width="7" height="6" stroke="#cccccc" fill="none" stroke-width="1.3"/></svg>
<svg style="left:1652px;top:643px" width="10" height="10" viewBox="0 0 10 10"><path d="M0.5 0.5 L9.5 9.5 M9.5 0.5 L0.5 9.5" stroke="#cccccc" stroke-width="1.2"/></svg>
<div class="a" style="left:1546px;top:664px;width:1px;height:324px;background:#0c0c0c"></div>
<div class="a" style="left:1560px;top:664px;width:1px;height:324px;background:#2b2b2b"></div>
<div class="a" style="left:1547px;top:665px;width:4px;height:5px;background:#6a6a6a"></div>
<div class="a" style="left:1561px;top:687px;width:119px;height:22px;background:#37373d"></div>
<div class="a" style="left:1561px;top:687px;width:1px;height:22px;background:#4d78cc"></div>
<svg style="left:1571px;top:669px" width="15" height="15" viewBox="0 0 15 15"><rect x="0.7" y="0.7" width="13.6" height="13.6" rx="1" stroke="#cccccc" fill="none" stroke-width="1.1"/><path d="M3.5 4 L6.5 7 L3.5 10 M7.5 11 H11.5" stroke="#cccccc" fill="none" stroke-width="1.1"/></svg>
<div class="t" style="left:1590px;top:670px;font-size:13px;color:#cccccc">powershell</div>
<svg style="left:1571px;top:691px" width="15" height="15" viewBox="0 0 15 15"><rect x="0.7" y="0.7" width="13.6" height="13.6" rx="1" stroke="#cccccc" fill="none" stroke-width="1.1"/><path d="M3.5 4 L6.5 7 L3.5 10 M7.5 11 H11.5" stroke="#cccccc" fill="none" stroke-width="1.1"/></svg>
<div class="t" style="left:1590px;top:692px;font-size:13px;color:#cccccc">python3</div>
<div class="t" style="left:551px;top:855px;font-family:'Liberation Mono',monospace;font-size:11.5px;letter-spacing:0.1px;color:#cccccc">2026-04-09 19:50:23,747 [INFO] __main__: Aplikasi Koreksi LJK Cerdas dimulai.</div>
<div class="a" style="left:551px;top:870px;width:7px;height:16px;border:1px solid #cccccc"></div><div class="a" id="win">
<!-- title bar -->
<div class="a" style="left:0;top:0;width:1300px;height:30px;background:#ffffff"></div>
<svg style="left:8px;top:8px" width="15" height="13" viewBox="0 0 15 13"><rect x="0.5" y="0.5" width="14" height="12" fill="#dfe6e4" stroke="#9aa"/><rect x="1.5" y="2.5" width="6" height="9" fill="#3a8a78"/><rect x="8.5" y="2.5" width="5" height="9" fill="#ffffff"/><rect x="10" y="2.5" width="1.5" height="6" fill="#7aa"/></svg>
<div class="t" style="left:29px;top:8.5px;font-size:11.3px;color:#8f8f8f">Aplikasi Koreksi LJK Cerdas v5.20</div>
<div class="a" style="left:1181px;top:14px;width:11px;height:1px;background:#777"></div>
<div class="a" style="left:1226px;top:9px;width:11px;height:11px;border:1px solid #777"></div>
<svg style="left:1272px;top:9px" width="11" height="11" viewBox="0 0 11 11"><path d="M0.5 0.5 L10.5 10.5 M10.5 0.5 L0.5 10.5" stroke="#777" stroke-width="1"/></svg>
<!-- menu bar -->
<div class="a" style="left:0;top:30px;width:1300px;height:23px;background:#16213e;border-bottom:1px solid #2e3554"></div>
<div class="t" style="left:8px;top:36px;font-size:13px;color:#ffffff">File</div>
<div class="a" style="left:45px;top:36px;width:13px;height:13px;background:#1e7fe0;border:1px solid #0d4f9a"></div>
<div class="t" style="left:49.5px;top:38.5px;font-size:10px;font-weight:bold;color:#bfe8ff">i</div>
<div class="t" style="left:65px;top:36px;font-size:13px;color:#ffffff">Tentang Aplikasi</div>
<!-- pane -->
<div class="a" style="left:10px;top:105px;width:1px;height:670px;background:#2c3358"></div>
<div class="a" style="left:1289px;top:106px;width:1px;height:669px;background:#2c3358"></div>
<div class="a" style="left:15px;top:780px;width:1269px;height:1px;background:#2c3358"></div>
<div class="a" style="left:613px;top:101px;width:672px;height:1px;background:#2c3358"></div>
<div class="a" style="left:1284px;top:101px;width:6px;height:6px;border-top:1px solid #2c3358;border-right:1px solid #2c3358;border-radius:0 6px 0 0"></div>
<!-- tabs -->
<div class="a" style="left:176px;top:61px;width:141px;height:38px;border:1px solid #34385a;border-bottom:none;border-radius:8px 8px 0 0;background:#1a1a2e"></div>
<div class="a" style="left:322px;top:61px;width:142px;height:38px;border:1px solid #34385a;border-bottom:none;border-radius:8px 8px 0 0;background:#1a1a2e"></div>
<div class="a" style="left:468px;top:61px;width:142px;height:38px;border:1px solid #34385a;border-bottom:none;border-radius:8px 8px 0 0;background:#1a1a2e"></div>
<div class="a" style="left:175px;top:85px;width:440px;height:16px;background:linear-gradient(180deg,rgba(26,26,46,0) 0%,rgba(26,26,46,1) 100%)"></div>
<div class="a" style="left:10px;top:61px;width:162px;height:41px;border:1px solid #2f3a66;border-bottom:3px solid #e94560;border-radius:8px 8px 7px 7px;background:#16213e"></div>

<svg style="left:32px;top:76px" width="15" height="11" viewBox="0 0 20 14"><path d="M1 1.5 Q1 0.7 1.8 0.7 H6.5 L8 2.3 H16.5 Q17.3 2.3 17.3 3.1 V5 H3.2 L1 12.5 Z" fill="#e9a93a" stroke="#1a1a1a" stroke-width="0.9"/><path d="M3.3 5 H19.2 L16.9 13.2 H0.9 Z" fill="#fcd56b" stroke="#1a1a1a" stroke-width="0.9" stroke-linejoin="round"/></svg>
<div class="t" style="left:54px;top:74.60px;font-size:13px;font-weight:bold;color:#ffffff">Upload&nbsp;&nbsp;Koreksi</div>
<svg style="left:201px;top:77px" width="13" height="13" viewBox="0 0 13 13"><rect x="0.5" y="0.5" width="12" height="12" fill="#f4f4f4" stroke="#222" stroke-width="0.8"/><rect x="2" y="5" width="2" height="7" fill="#43a047"/><rect x="5.5" y="7" width="2" height="5" fill="#f4511e"/><rect x="9" y="3" width="2" height="9" fill="#1e88e5"/></svg>
<div class="t" style="left:220.5px;top:77.00px;font-size:13px;color:#b4b8cc">Hasil Koreksi</div>
<svg style="left:363px;top:77px" width="13" height="14" viewBox="0 0 13 14"><path d="M2.5 0.6 H11 Q12.4 0.6 12.4 2 Q12.4 2.8 11.5 2.8 H10.5 V12 Q10.5 13.4 9 13.4 H2.2 Q0.8 13.4 0.8 12 Q0.8 11 2 11 H2.5 Z" fill="#f6dcb4" stroke="#5a3a1e" stroke-width="0.9"/><path d="M4 4.5 H8.8 M4 6.5 H8.8 M4 8.5 H8.8" stroke="#b4783c" stroke-width="1"/></svg>
<div class="t" style="left:382px;top:76.70px;font-size:13px;color:#b4b8cc">Riwayat</div>
<svg style="left:492px;top:77px" width="12" height="14" viewBox="0 0 12 14"><path d="M0.6 0.6 H8 L11.4 4 V13.4 H0.6 Z" fill="#ffffff" stroke="#222" stroke-width="0.9"/><path d="M2.5 5 H9.5 M2.5 7 H9.5 M2.5 9 H9.5 M2.5 11 H9.5 M2.5 3 H6.5" stroke="#555" stroke-width="0.9"/></svg>
<div class="t" style="left:509.29999999999995px;top:76.70px;font-size:13px;color:#b4b8cc">Ekstraksi Soal</div><svg style="left:28px;top:123px" width="20" height="14" viewBox="0 0 20 14"><path d="M1 1.5 Q1 0.7 1.8 0.7 H6.5 L8 2.3 H16.5 Q17.3 2.3 17.3 3.1 V5 H3.2 L1 12.5 Z" fill="#e9a93a" stroke="#1a1a1a" stroke-width="0.9"/><path d="M3.3 5 H19.2 L16.9 13.2 H0.9 Z" fill="#fcd56b" stroke="#1a1a1a" stroke-width="0.9" stroke-linejoin="round"/></svg>
<div class="t" style="left:58px;top:120.99px;font-size:17.5px;font-weight:bold;color:#e94560">Upload Lembar Jawab</div>
<svg style="left:26px;top:153px" width="554" height="179" viewBox="0 0 554 179"><g fill="none" stroke="#e94560" stroke-width="3"><path d="M25 1.5 H529 M552.5 25 V154 M529 177.5 H25 M1.5 154 V25" stroke-dasharray="12 6.6" stroke-dashoffset="-6"/><path d="M1.5 22 V12.5 A11 11 0 0 1 12.5 1.5 H25 M529 1.5 H541.5 A11 11 0 0 1 552.5 12.5 V26 M552.5 153 V166.5 A11 11 0 0 1 541.5 177.5 H529 M25 177.5 H12.5 A11 11 0 0 1 1.5 166.5 V154"/></g></svg>
<svg style="left:164px;top:199px" width="15" height="14" viewBox="0 0 15 14"><rect x="0.5" y="0.5" width="14" height="13" fill="#f2c94c" stroke="#222" stroke-width="0.8"/><rect x="2.5" y="2.5" width="10" height="8.5" fill="#9fd3f0"/><path d="M2.5 11 L6 6.5 L8.5 9 L10 7.5 L12.5 11 Z" fill="#4caf50"/><circle cx="5" cy="5.5" r="1.3" fill="#e53935"/></svg>
<div class="t" style="left:189px;top:199.15px;font-size:14px;color:#a6a8bc">Drag &amp; Drop gambar lembar jawab di sini</div>
<div class="t" style="left:-97px;width:800px;text-align:center;top:237.45px;font-size:14px;color:#a6a8bc">atau klik untuk memilih file</div>
<div class="t" style="left:-97px;width:800px;text-align:center;top:276.40px;font-size:13px;color:#a6a8bc">Format: JPG, PNG, BMP, TIFF, PDF</div>
<div class="a" style="left:26px;top:347px;width:177px;height:56px;background:#e94560;border-radius:8px"></div>
<div class="a" style="left:215px;top:347px;width:177px;height:56px;background:#e94560;border-radius:8px"></div>
<div class="a" style="left:404px;top:345px;width:176px;height:59px;background:#1a1a2e;border:2px solid #e94560;border-radius:8px"></div>
<svg style="left:77px;top:371px" width="15" height="11" viewBox="0 0 20 14"><path d="M1 1.5 Q1 0.7 1.8 0.7 H6.5 L8 2.3 H16.5 Q17.3 2.3 17.3 3.1 V5 H3.2 L1 12.5 Z" fill="#e9a93a" stroke="#1a1a1a" stroke-width="0.9"/><path d="M3.3 5 H19.2 L16.9 13.2 H0.9 Z" fill="#fcd56b" stroke="#1a1a1a" stroke-width="0.9" stroke-linejoin="round"/></svg>
<div class="t" style="left:98px;top:370.00px;font-size:13px;font-weight:bold;color:#ffffff">Pilih File</div>
<svg style="left:258px;top:371px" width="15" height="11" viewBox="0 0 20 14"><path d="M1 1.5 Q1 0.7 1.8 0.7 H6.5 L8 2.3 H16.5 Q17.3 2.3 17.3 3.1 V5 H3.2 L1 12.5 Z" fill="#e9a93a" stroke="#1a1a1a" stroke-width="0.9"/><path d="M3.3 5 H19.2 L16.9 13.2 H0.9 Z" fill="#fcd56b" stroke="#1a1a1a" stroke-width="0.9" stroke-linejoin="round"/></svg>
<div class="t" style="left:279px;top:370.00px;font-size:13px;font-weight:bold;color:#ffffff">Pilih Folder</div>
<svg style="left:441px;top:369px" width="14" height="15" viewBox="0 0 14 15"><path d="M1 2.2 H13 L11.3 14.3 H2.7 Z" fill="#c4c9cc" stroke="#111" stroke-width="1.1" stroke-linejoin="round"/><path d="M1 2.2 H13" stroke="#e6e9eb" stroke-width="1.6"/><path d="M3.3 5 L10.7 12 M6 4.5 L11.3 9.5 M2.8 8 L7.5 12.5 M10.7 5 L3.3 12 M8 4.5 L2.7 9.5 M11.2 8 L6.5 12.5" stroke="#8a9094" stroke-width="0.6"/></svg>
<div class="t" style="left:463px;top:370.25px;font-size:12.7px;font-weight:bold;color:#e94560">Hapus Semua</div>
<div class="a" style="left:26px;top:417px;width:22px;height:22px;background:#0f0f1a;border:2px solid #363d6c;border-radius:4px"></div>
<div class="t" style="left:56px;top:423.00px;font-size:13px;color:#ffffff">Termasuk Subfolder (Rekursif)</div>
<div class="a" style="left:26px;top:463px;width:554px;height:266px;background:#16213e;border:2px solid #363d6c;border-radius:9px"></div>
<div class="a" style="left:26px;top:451px;width:115px;height:25px;background:#e94560;border-radius:6px"></div>
<div class="t" style="left:38px;top:458.40px;font-size:13px;color:#ffffff">File yang Dipilih</div>
<div class="a" style="left:52px;top:489px;width:503px;height:16px;background:#1b1c30"></div>
<div class="t" style="left:52px;top:491.84px;font-size:12px;color:#a6a8bc">0 file dipilih</div>
<div class="a" style="left:52px;top:511px;width:503px;height:192px;background:#1a1a2e;border:1px solid #a9abb8"></div>
<div class="a" style="left:580px;top:116px;width:1px;height:656px;background:#2c3358"></div><svg style="left:583px;top:121px" width="18" height="18" viewBox="0 0 18 18"><rect x="6.9" y="0.7" width="4.2" height="4.5" rx="0.9" transform="rotate(0 9 9)" fill="#111" stroke="#111" stroke-width="1.4"/><rect x="6.9" y="0.7" width="4.2" height="4.5" rx="0.9" transform="rotate(45 9 9)" fill="#111" stroke="#111" stroke-width="1.4"/><rect x="6.9" y="0.7" width="4.2" height="4.5" rx="0.9" transform="rotate(90 9 9)" fill="#111" stroke="#111" stroke-width="1.4"/><rect x="6.9" y="0.7" width="4.2" height="4.5" rx="0.9" transform="rotate(135 9 9)" fill="#111" stroke="#111" stroke-width="1.4"/><rect x="6.9" y="0.7" width="4.2" height="4.5" rx="0.9" transform="rotate(180 9 9)" fill="#111" stroke="#111" stroke-width="1.4"/><rect x="6.9" y="0.7" width="4.2" height="4.5" rx="0.9" transform="rotate(225 9 9)" fill="#111" stroke="#111" stroke-width="1.4"/><rect x="6.9" y="0.7" width="4.2" height="4.5" rx="0.9" transform="rotate(270 9 9)" fill="#111" stroke="#111" stroke-width="1.4"/><rect x="6.9" y="0.7" width="4.2" height="4.5" rx="0.9" transform="rotate(315 9 9)" fill="#111" stroke="#111" stroke-width="1.4"/><circle cx="9" cy="9" r="6.3" fill="#111" stroke="#111" stroke-width="1.4"/><rect x="6.9" y="0.7" width="4.2" height="4.5" rx="0.9" transform="rotate(0 9 9)" fill="#f4f4f4"/><rect x="6.9" y="0.7" width="4.2" height="4.5" rx="0.9" transform="rotate(45 9 9)" fill="#f4f4f4"/><rect x="6.9" y="0.7" width="4.2" height="4.5" rx="0.9" transform="rotate(90 9 9)" fill="#f4f4f4"/><rect x="6.9" y="0.7" width="4.2" height="4.5" rx="0.9" transform="rotate(135 9 9)" fill="#f4f4f4"/><rect x="6.9" y="0.7" width="4.2" height="4.5" rx="0.9" transform="rotate(180 9 9)" fill="#f4f4f4"/><rect x="6.9" y="0.7" width="4.2" height="4.5" rx="0.9" transform="rotate(225 9 9)" fill="#f4f4f4"/><rect x="6.9" y="0.7" width="4.2" height="4.5" rx="0.9" transform="rotate(270 9 9)" fill="#f4f4f4"/><rect x="6.9" y="0.7" width="4.2" height="4.5" rx="0.9" transform="rotate(315 9 9)" fill="#f4f4f4"/><circle cx="9" cy="9" r="6.3" fill="#f4f4f4"/><circle cx="9" cy="9" r="3.7" fill="#cfcfcf" stroke="#777" stroke-width="0.9"/><circle cx="9" cy="9" r="2" fill="#111"/></svg>
<div class="t" style="left:611px;top:120.99px;font-size:17.5px;font-weight:bold;color:#e94560">Konfigurasi Ujian</div>
<div class="a" style="left:581px;top:165px;width:693px;height:188px;background:#16213e;border:2px solid #363d6c;border-radius:9px"></div><div class="a" style="left:581px;top:153px;width:110px;height:25px;background:#e94560;border-radius:6px"></div><div class="t" style="left:592px;top:160.00px;font-size:13px;color:#ffffff">Informasi Ujian</div>
<div class="a" style="left:606px;top:191px;width:71px;height:28px;background:#1b1c30"></div><div class="t" style="left:606px;top:199.50px;font-size:13px;color:#ffffff">Nama Ujian:</div>
<div class="a" style="left:720px;top:191px;width:527px;height:39px;background:#0f1118;border:2px solid #363d6c;border-radius:7px"></div><div class="t" style="left:736px;top:204.86px;font-size:12.8px;color:#8a8c9a">Contoh: UTS Matematika Kelas 10A</div>
<div class="a" style="left:606px;top:240px;width:64px;height:28px;background:#1b1c30"></div><div class="t" style="left:606px;top:248.50px;font-size:13px;color:#ffffff">Jenis Ujian:</div>
<div class="a" style="left:720px;top:240px;width:527px;height:39px;background:#0f1118;border:2px solid #363d6c;border-radius:7px"></div><div class="t" style="left:734px;top:253.95px;font-size:12.7px;color:#e8e8ee">Smart LJK (MCQ + Esai)</div>
<div class="a" style="left:606px;top:289px;width:104px;height:28px;background:#1b1c30"></div><div class="t" style="left:606px;top:297.92px;font-size:12.5px;color:#ffffff">Jeda Per Request:</div>
<div class="a" style="left:720px;top:289px;width:527px;height:39px;background:#0f1118;border:2px solid #363d6c;border-radius:7px"></div><div class="t" style="left:736px;top:302.70px;font-size:13px;color:#e8e8ee">3 detik</div><div class="a" style="left:1219px;top:289px;width:28px;height:39px;background:#0c0d13"></div><div class="a" style="left:1219px;top:308px;width:28px;height:1px;background:#1c1d28"></div><svg style="left:1227px;top:289px" width="12" height="39" viewBox="0 0 12 39"><path d="M0.5 15.5 L6 9.5 L11.5 15.5 Z M0.5 24.5 L6 30.5 L11.5 24.5 Z" fill="#f0f0f0"/></svg>
<div class="a" style="left:581px;top:378px;width:693px;height:318px;background:#16213e;border:2px solid #363d6c;border-radius:9px"></div><div class="a" style="left:581px;top:366px;width:233px;height:25px;background:#e94560;border-radius:6px"></div><div class="t" style="left:592px;top:373.00px;font-size:13px;color:#ffffff">Konfigurasi Smart LJK (MCQ + Esai)</div>
<div class="a" style="left:605px;top:404px;width:642px;height:30px;background:#1b1c30"></div>
<div class="t" style="left:606px;top:407.07px;font-size:11.5px;color:#c0c4d8">AI akan mengoreksi bagian MCQ maupun Esai secara bersamaan. Pindai dokumen soal ujian Anda untuk mengekstrak kunci</div>
<div class="t" style="left:606px;top:421.77px;font-size:11.5px;color:#c0c4d8">ganda sekaligus rubrik esai secara otomatis.</div>
<div class="a" style="left:606px;top:444px;width:100px;height:29px;background:#1b1c30"></div><div class="t" style="left:606px;top:452.75px;font-size:12.7px;color:#ffffff">Skor Benar MCQ:</div>
<div class="a" style="left:738px;top:445px;width:509px;height:37px;background:#0f1118;border:2px solid #363d6c;border-radius:7px"></div><div class="t" style="left:754px;top:457.70px;font-size:13px;color:#e8e8ee">1.00</div><div class="a" style="left:1219px;top:445px;width:28px;height:37px;background:#0c0d13"></div><div class="a" style="left:1219px;top:463px;width:28px;height:1px;background:#1c1d28"></div><svg style="left:1227px;top:445px" width="12" height="37" viewBox="0 0 12 37"><path d="M0.5 14.5 L6 8.5 L11.5 14.5 Z M0.5 23.5 L6 29.5 L11.5 23.5 Z" fill="#f0f0f0"/></svg>
<div class="a" style="left:606px;top:492px;width:98px;height:29px;background:#1b1c30"></div><div class="t" style="left:606px;top:500.75px;font-size:12.7px;color:#ffffff">Skor Salah MCQ:</div>
<div class="a" style="left:738px;top:493px;width:509px;height:36px;background:#0f1118;border:2px solid #363d6c;border-radius:7px"></div><div class="t" style="left:754px;top:505.20px;font-size:13px;color:#e8e8ee">0.00</div><div class="a" style="left:1219px;top:493px;width:28px;height:36px;background:#0c0d13"></div><div class="a" style="left:1219px;top:511px;width:28px;height:1px;background:#1c1d28"></div><svg style="left:1227px;top:493px" width="12" height="36" viewBox="0 0 12 36"><path d="M0.5 14.0 L6 8.0 L11.5 14.0 Z M0.5 23.0 L6 29.0 L11.5 23.0 Z" fill="#f0f0f0"/></svg>
<div class="a" style="left:606px;top:539px;width:122px;height:30px;background:#1b1c30"></div><div class="t" style="left:606px;top:547.92px;font-size:12.5px;color:#ffffff">Kunci Parsed (JSON):</div>
<div class="a" style="left:738px;top:540px;width:509px;height:36px;background:#0f1118;border:2px solid #363d6c;border-radius:7px"></div><div class="t" style="left:756px;top:552.36px;font-size:12.8px;color:#8a8c9a">Format JSON berisi mcq_answers dan essay_questions akan tampil di sini...</div><div class="a" style="left:1224px;top:549px;width:10px;height:18px;background:#3a4378;border-top:1px dotted #d0d0e0;border-bottom:1px dotted #d0d0e0"></div>
<div class="a" style="left:606px;top:587px;width:109px;height:29px;background:#1b1c30"></div><div class="t" style="left:606px;top:595.75px;font-size:12.7px;color:#ffffff">Rubrik Umum Esai:</div>
<div class="a" style="left:738px;top:587px;width:509px;height:37px;background:#0f1118;border:2px solid #363d6c;border-radius:7px"></div><div class="t" style="left:756px;top:599.70px;font-size:13px;color:#8a8c9a">Rubrik penilaian umum untuk esai (opsional)...</div><div class="a" style="left:1224px;top:596px;width:10px;height:19px;background:#3a4378;border-top:1px dotted #d0d0e0;border-bottom:1px dotted #d0d0e0"></div>
<div class="a" style="left:606px;top:634px;width:316px;height:60px;background:#16213e;border:2px solid #e94560;border-radius:8px"></div>
<div class="a" style="left:932px;top:634px;width:316px;height:60px;background:#16213e;border:2px solid #e94560;border-radius:8px"></div>
<svg style="left:719px;top:661px" width="15" height="11" viewBox="0 0 20 14"><path d="M1 1.5 Q1 0.7 1.8 0.7 H6.5 L8 2.3 H16.5 Q17.3 2.3 17.3 3.1 V5 H3.2 L1 12.5 Z" fill="#e9a93a" stroke="#1a1a1a" stroke-width="0.9"/><path d="M3.3 5 H19.2 L16.9 13.2 H0.9 Z" fill="#fcd56b" stroke="#1a1a1a" stroke-width="0.9" stroke-linejoin="round"/></svg>
<div class="t" style="left:741px;top:658.80px;font-size:13px;font-weight:bold;color:#e94560">Muat JSON</div>
<svg style="left:1014px;top:660px" width="15" height="11" viewBox="0 0 15 11"><rect x="0.6" y="0.6" width="13.8" height="9.8" rx="1" fill="#555a5e" stroke="#0a0a0a" stroke-width="1.1"/><rect x="1.2" y="1.2" width="12.6" height="2.6" fill="#f4f0ee"/><circle cx="7.5" cy="5.6" r="2.6" fill="#222" stroke="#0a0a0a" stroke-width="0.8"/><path d="M5 8.2 L6 7.4 M10 8.2 L9 7.4" stroke="#ddd" stroke-width="0.7"/></svg>
<div class="t" style="left:1035px;top:659.33px;font-size:12.6px;font-weight:bold;color:#e94560">Scan Kunci Smart (AI)</div>
<div class="a" style="left:581px;top:709px;width:693px;height:55px;background:linear-gradient(90deg,#e94560 0%,#2196f3 100%);border-radius:10px"></div>
<svg style="left:867px;top:728px" width="19" height="18" viewBox="0 0 19 18"><path d="M5.5 9.5 L2 10 L1 13 L5 12.5 Z" fill="#29a8e0" stroke="#111" stroke-width="0.9" stroke-linejoin="round"/><path d="M9 13 L8.5 16.5 L5.5 17.5 L6 13.5 Z" fill="#29a8e0" stroke="#111" stroke-width="0.9" stroke-linejoin="round"/><path d="M4.5 13.5 L1.5 17 L5.5 15 Z" fill="#f7b462" stroke="#3a1a10" stroke-width="0.9"/><path d="M18 0.8 C12.5 1.5 8.5 5 5 10.5 L8.5 14 C14 10.5 17.5 6.5 18 0.8 Z" fill="#ffffff" stroke="#111" stroke-width="1"/><path d="M18 0.8 C16 1 14 1.8 12.5 2.8 L16.2 6.5 C17.2 5 17.9 3 18 0.8 Z" fill="#e0202c"/><ellipse cx="11.2" cy="7.8" rx="1.5" ry="1.3" fill="#c8c8d0"/><path d="M6 11.5 L7.5 13" stroke="#5cd0f0" stroke-width="1.6"/></svg>
<div class="t" style="left:892.5px;top:730.73px;font-size:14.5px;font-weight:bold;color:#ffffff">Mulai Koreksi</div><div class="a" style="left:0px;top:789px;width:1300px;height:61px;background:#1a1a2e;border-top:1px solid #2c3358"></div>
<div class="a" style="left:1282px;top:790px;width:18px;height:60px;background:#1a2040"></div>
<div class="t" style="left:2px;top:815.00px;font-size:13px;color:#ffffff">Siap</div>
<div class="a" style="left:969px;top:791px;width:1px;height:57px;background:#e0e0e8"></div>
<div class="a" style="left:974px;top:792px;width:268px;height:56px;background:#e94560;border-radius:8px"></div>
<svg style="left:996px;top:814px" width="15" height="15" viewBox="0 0 15 15"><path d="M1.2 0.8 L4.3 3.3 H10.7 L13.8 0.8 V9.5 Q13.8 14.3 7.5 14.3 Q1.2 14.3 1.2 9.5 Z" fill="#e8eaec" stroke="#111" stroke-width="1.1" stroke-linejoin="round"/><rect x="6.8" y="3.6" width="1.5" height="2" fill="#e53935"/><rect x="3" y="6.3" width="9" height="3.2" fill="#111"/><rect x="3.8" y="7" width="3" height="2" fill="#7fd3f0"/><rect x="8.2" y="7" width="3" height="2" fill="#7fd3f0"/><path d="M4.8 11.3 H10.2" stroke="#111" stroke-width="1.1"/></svg>
<div class="t" style="left:1017px;top:815.00px;font-size:13px;font-weight:bold;color:#ffffff">Google Gemini · gemini-2.5-flash</div>
<div class="a" style="left:1243px;top:791px;width:1px;height:57px;background:#e0e0e8"></div>
<div class="t" style="left:1248px;top:815.19px;font-size:11px;color:#9a9cb0">v5.20</div>
<div class="a" style="left:1281px;top:791px;width:1px;height:57px;background:#e0e0e8"></div>
</div>
</body></html>
